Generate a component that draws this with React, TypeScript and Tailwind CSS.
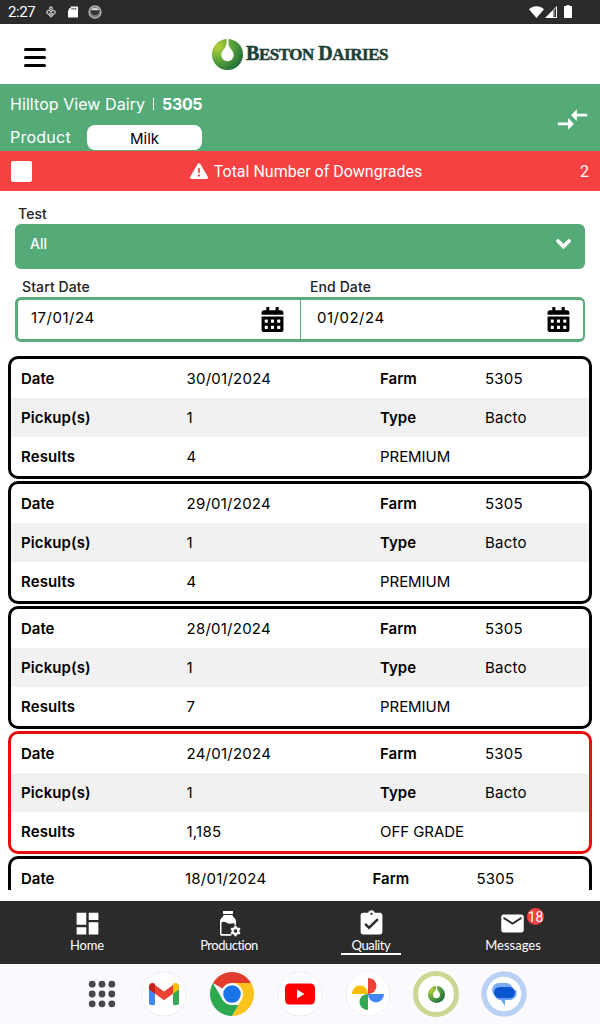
import React from 'react';
import { FaCalendarAlt } from 'react-icons/fa';
import { FaTriangleExclamation } from 'react-icons/fa6';
import {
    MdAssignmentTurnedIn,
    MdCompareArrows,
    MdDashboard,
    MdEmail,
} from 'react-icons/md';

type Result = {
    date: string;
    farm: string;
    pickups: string;
    type: string;
    result: string;
    grade: string;
    failed?: boolean;
};

const results: Result[] = [
    { date: '30/01/2024', farm: '5305', pickups: '1', type: 'Bacto', result: '4', grade: 'PREMIUM' },
    { date: '29/01/2024', farm: '5305', pickups: '1', type: 'Bacto', result: '4', grade: 'PREMIUM' },
    { date: '28/01/2024', farm: '5305', pickups: '1', type: 'Bacto', result: '7', grade: 'PREMIUM' },
    {
        date: '24/01/2024',
        farm: '5305',
        pickups: '1',
        type: 'Bacto',
        result: '1,185',
        grade: 'OFF GRADE',
        failed: true,
    },
];

const BestonMark = ({ size, id }: { size: number; id: string }) => (
    <svg width={size} height={size} viewBox="0 0 30 30" className="shrink-0">
        <defs>
            <radialGradient id={id} cx="0.2" cy="0.25" r="0.9">
                <stop offset="0" stopColor="#b9d03a" />
                <stop offset="0.5" stopColor="#5ba53a" />
                <stop offset="1" stopColor="#1d6a3c" />
            </radialGradient>
        </defs>
        <circle cx="15" cy="15" r="15" fill={`url(#${id})`} />
        <path
            d="M14.300 0h1.600c0 5 .3 7 1.800 9 2.300 2.800 3.300 4 3.300 6.500a6 6 0 0 1-12 0c0-2.500 1.300-4 3.200-6.500C13.800 7 14.200 4 14.300 0z"
            fill="#fff"
        />
    </svg>
);

const StatusBar = () => (
    <div className="flex h-6 items-center bg-[#2b2b2b] pl-2 pr-[27px] text-white">
        <span className="w-[38px] font-['Roboto',sans-serif] text-[15px] leading-6 tracking-[-0.4px]">2:27</span>
        <svg width="10" height="12" viewBox="0 0 10 12" fill="none" stroke="#c4c4c4" strokeWidth="1.300">
            <circle cx="5" cy="2.300" r="1.400" />
            <path d="M5 10.800 1.200 7.200a1.800 1.800 0 0 1 2.500-2.500L5 6l1.300-1.300a1.800 1.800 0 0 1 2.500 2.500z" />
            <path d="M3.300 7 5 8.600 6.700 7" />
        </svg>
        <svg width="10" height="12" viewBox="0 0 11 12" className="ml-3">
            <path d="M3 0h8v12H0V4h1V2h2z" fill="#fff" />
            <path d="M4.500 1.500v2M6.500 1.500v2M8.500 1.500v2" stroke="#2b2b2b" />
        </svg>
        <svg width="14" height="14" viewBox="0 0 14 14" className="ml-[10px]">
            <circle cx="7" cy="7" r="6" fill="#777" stroke="#b5b5b5" strokeWidth="1.300" />
            <path d="M2.800 4.500C5 2.800 9 2.800 11.200 4.500 11.500 8 10 10 7 10S2.500 8 2.800 4.500z" fill="#333" />
            <path d="M2.800 4.300Q7 1.500 11.200 4.300L10 5.300H4z" fill="#ddd" />
        </svg>
        <div className="ml-auto flex items-center">
            <svg width="15" height="12" viewBox="0 0 15 12" fill="#fff">
                <path d="M7.500 12 0 3.200C4-.8 11-.8 15 3.200z" />
            </svg>
            <svg width="12" height="12" viewBox="0 0 12 12" className="ml-px">
                <path d="M0 12 12 0v12z" fill="#fff" />
                <path d="M8.500 4.500 11 2v9H8.500z" fill="#2b2b2b" />
                <path d="M9.500 4v6.500" stroke="#777" />
            </svg>
            <svg width="8" height="13" viewBox="0 0 8 13" fill="#fff" className="-mt-[2px] ml-[7px] mr-px">
                <path d="M2.500 0h3v1H8v12H0V1h2.500z" />
            </svg>
        </div>
    </div>
);

const Header = () => (
    <header className="flex h-[60px] items-center bg-white pl-6">
        <svg width="22" height="20" viewBox="0 0 22 20" className="mt-[6px]" stroke="#000" strokeWidth="3" strokeLinecap="round">
            <path d="M1.500 2.500h19M1.500 10.500h19M1.500 18.500h19" />
        </svg>
        <div className="ml-[166px] flex items-center">
            <BestonMark size={31} id="header-mark" />
            <span className="ml-[3px] whitespace-nowrap font-['Liberation_Serif',serif] text-[20px] font-bold leading-[30px] tracking-[-0.48px] text-[#1f4037] [-webkit-text-stroke:0.5px_#1f4037]">
                B<span className="text-[17px]">ESTON</span> D<span className="text-[17px]">AIRIES</span>
            </span>
        </div>
    </header>
);

const FarmBar = () => (
    <div className="flex h-[67px] items-start justify-between bg-[#54ab78] pl-[10px] pr-[10px] text-white">
        <div>
            <div className="mt-[9px] flex h-[22px] items-center text-base">
                <span className="tracking-[0.06px]">Hilltop View Dairy</span>
                <span className="ml-2 mr-[8px] h-3 w-px bg-white" />
                <span className="font-bold tracking-[-0.35px]">5305</span>
            </div>
            <div className="mt-[10px] flex items-start">
                <span className="w-[77px] text-base leading-6 tracking-[0.25px]">Product</span>
                <span className="h-[25px] w-[115px] rounded-lg bg-white text-center text-[15px] leading-[27px] text-black">
                    Milk
                </span>
            </div>
        </div>
        <MdCompareArrows size={35} className="mt-[18px]" />
    </div>
);

const DowngradeBar = () => (
    <div className="flex h-10 items-center justify-between bg-[#f54141] pl-[11px] pr-[11px] font-['Roboto',sans-serif] text-base text-white">
        <span className="h-[21px] w-[21px] rounded-[2px] bg-white" />
        <span className="flex items-center gap-[6px]">
            <FaTriangleExclamation size={18} />
            <span className="pt-[2px]">Total Number of Downgrades</span>
        </span>
        <span className="pt-[2px]">2</span>
    </div>
);

const DateField = ({ value }: { value: string }) => (
    <div className="flex flex-1 items-center justify-between text-[15px] tracking-[0.5px] text-black">
        <span className="-mt-1">{value}</span>
        <FaCalendarAlt size={25} />
    </div>
);

const Filters = () => (
    <section className="px-[15px] text-sm font-medium tracking-[0.1px] text-[#222]">
        <div className="mt-[13px] pl-[3px] leading-5">Test</div>
        <div className="flex h-[45px] items-start justify-between rounded-md bg-[#54ab78] pl-[15px] pr-[13px] text-white">
            <span className="leading-10 tracking-normal">All</span>
            <svg width="17" height="12" viewBox="0 0 17 12" className="mt-[14px]" fill="none" stroke="#fff" strokeWidth="3.800" strokeLinecap="round">
                <path d="m3 3 5.500 5.500L14 3" />
            </svg>
        </div>
        <div className="mt-2 mb-px flex h-[19px] leading-[19px]">
            <span className="w-[288px] pl-[7px]">Start Date</span>
            <span className="pl-[7px]">End Date</span>
        </div>
        <div className="flex h-[45px] rounded-md border-[3px] border-r-2 border-[#5aaa7b] font-normal">
            <div className="flex w-[283px] border-r border-[#5aaa7b] pl-[13px] pr-[15px]">
                <DateField value="17/01/24" />
            </div>
            <div className="flex flex-1 pl-4 pr-3">
                <DateField value="01/02/24" />
            </div>
        </div>
    </section>
);

const ResultCard = ({ item }: { item: Result }) => (
    <div
        className={`h-[123px] shrink-0 overflow-hidden rounded-[10px] border-[3px] ${
            item.failed ? 'border-[#e80c0c]' : 'border-black'
        }`}
    >
        <div className="grid h-[39px] grid-cols-[165.500px_193.500px_105px_1fr] items-center pl-[10px] pt-[2px]">
            <b className="font-semibold tracking-normal">Date</b>
            <span>{item.date}</span>
            <b className="font-semibold tracking-normal">Farm</b>
            <span>{item.farm}</span>
        </div>
        <div className="grid h-[39px] grid-cols-[165.500px_193.500px_105px_1fr] items-center bg-[#f1f1f1] pl-[10px] pt-[2px]">
            <b className="font-semibold tracking-[0.1px]">Pickup(s)</b>
            <span>{item.pickups}</span>
            <b className="font-semibold tracking-normal">Type</b>
            <span>{item.type}</span>
        </div>
        <div className="grid h-[39px] grid-cols-[165.500px_193.500px_1fr] items-center pl-[10px] pt-[2px]">
            <b className="font-semibold tracking-[0.1px]">Results</b>
            <span>{item.result}</span>
            <span className="tracking-[-0.05px]">{item.grade}</span>
        </div>
    </div>
);

const ResultList = () => (
    <main className="mx-2 mt-[14px] flex h-[534px] flex-col gap-[2px] overflow-hidden text-[15px] tracking-[0.24px] text-black">
        {results.map((item) => (
            <ResultCard key={item.date} item={item} />
        ))}
        <div className="h-[34px] shrink-0 rounded-t-[10px] border-[3px] border-b-0 border-black">
            <div className="grid h-[39px] grid-cols-[164px_187.500px_104px_1fr] items-center pl-[10px] pt-[2px]">
                <b className="font-semibold tracking-normal">Date</b>
                <span>18/01/2024</span>
                <b className="font-semibold tracking-normal">Farm</b>
                <span>5305</span>
            </div>
        </div>
    </main>
);

const ProductionIcon = () => (
    <svg width="22" height="26" viewBox="0 0 22 26" className="ml-[2px]">
        <path d="M4 0h10v3H4z" fill="#fff" />
        <path d="M4.500 4h9c0 2.500 3.500 3 3.500 6V16l-6 8.500H2.500A1.500 1.500 0 0 1 1 23V10c0-3 3.500-3.500 3.500-6z" fill="#fff" />
        <path d="M2.500 11.500c3-2 5 1 8 1.200 2 .1 3.200-.7 5-.2V17L11 23.500H2.500z" fill="#2b2b2b" />
        <path d="M13 23.800H2" stroke="#fff" strokeWidth="1.500" />
        <circle cx="16.500" cy="20" r="5.800" fill="#2b2b2b" />
        <circle cx="16.500" cy="20" r="2.900" fill="none" stroke="#fff" strokeWidth="2.200" />
        <path
            d="M16.500 14.800v2M16.500 23.200v2M12 17.400l1.700 1M19.300 21.600l1.700 1M12 22.600l1.700-1M19.300 18.400l1.700-1"
            stroke="#fff"
            strokeWidth="2.200"
        />
    </svg>
);

const NavItem = ({
    label,
    active,
    labelClass = 'tracking-[-0.2px]',
    children,
}: {
    label: string;
    active?: boolean;
    labelClass?: string;
    children: React.ReactNode;
}) => (
    <div className="flex w-[142px] flex-col items-center">
        <div className="flex h-[35px] items-center justify-center pt-[10px]">{children}</div>
        <span
            className={`flex h-[19px] w-[60px] justify-center whitespace-nowrap leading-[19px] ${
                active ? 'border-b-2 border-white' : ''
            }`}
        >
            <span className={labelClass}>{label}</span>
        </span>
    </div>
);

const BottomNav = () => (
    <nav className="mt-[11px] flex h-[63px] bg-[#2b2b2b] px-4 font-['Lato',sans-serif] text-[13px] text-white">
        <NavItem label="Home">
            <MdDashboard size={29} />
        </NavItem>
        <NavItem label="Production" labelClass="tracking-[-0.5px]">
            <ProductionIcon />
        </NavItem>
        <NavItem label="Quality" labelClass="tracking-[-0.4px]" active>
            <MdAssignmentTurnedIn size={29} />
        </NavItem>
        <NavItem label="Messages" labelClass="tracking-normal">
            <div className="relative mr-px">
                <MdEmail size={27} />
                <span className="absolute -top-[2px] left-[28px] h-[17px] w-[17px] rounded-full bg-[#f54141] text-center font-['Roboto',sans-serif] text-sm leading-[18px]">
                    <span className="-mx-1">18</span>
                </span>
            </div>
        </NavItem>
    </nav>
);

const AppsIcon = () => (
    <svg width="44" height="44" viewBox="0 0 44 44" fill="#46464c">
        {[12.2, 22, 31.8].map((y) => [12.2, 22, 31.8].map((x) => <circle key={`${x}-${y}`} cx={x} cy={y} r="3.400" />))}
    </svg>
);

const GmailIcon = () => (
    <svg width="46" height="46" viewBox="0 0 46 46">
        <circle cx="23" cy="23" r="22" fill="#fff" stroke="#f1eef5" />
        <path d="M8 15v17a2 2 0 0 0 2 2h4V20z" fill="#4285f4" />
        <path d="M32 20v14h4a2 2 0 0 0 2-2V15z" fill="#34a853" />
        <path d="M14 14v8.700l9 6.500 9-6.500V14l-9 6.500z" fill="#ea4335" />
        <path d="M8 18.500v-3c0-3.600 3.800-4.300 6-2.700v9.900z" fill="#c5221f" />
        <path d="M38 18.500v-3c0-3.600-3.800-4.300-6-2.700v9.900z" fill="#fbbc04" />
    </svg>
);

const ChromeIcon = () => (
    <svg width="44" height="44" viewBox="0 0 44 44">
        <path d="M22 22 2.950 11A22 22 0 0 1 41.050 11z" fill="#e33b2e" />
        <path d="M22 11h19.050A22 22 0 0 1 22 44l9.500-16.500z" fill="#fcc31e" />
        <path d="M2.950 11 12.500 27.500 22 33h6.400L22 44A22 22 0 0 1 2.950 11z" fill="#2da94f" />
        <circle cx="22" cy="22" r="11" fill="#fff" />
        <circle cx="22" cy="22" r="8.800" fill="#1a73e8" />
    </svg>
);

const YoutubeIcon = () => (
    <svg width="46" height="46" viewBox="0 0 46 46">
        <circle cx="23" cy="23" r="22" fill="#fff" stroke="#f1eef5" />
        <rect x="8" y="12.500" width="30" height="21" rx="4.500" fill="#f00" />
        <path d="M20 18.500v9l7.500-4.500z" fill="#fff" />
    </svg>
);

const PhotosIcon = () => (
    <svg width="46" height="46" viewBox="0 0 46 46">
        <circle cx="23" cy="23" r="22" fill="#fff" stroke="#f1eef5" />
        <path d="M23 7a8.500 8 0 0 1 0 16z" fill="#ea4335" />
        <path d="M39 23a8 8.500 0 0 1-16 0z" fill="#4285f4" />
        <path d="M23 39a8.500 8 0 0 1 0-16z" fill="#34a853" />
        <path d="M7 23a8 8.500 0 0 1 16 0z" fill="#fbbc04" />
    </svg>
);

const MessagesIcon = () => (
    <svg width="46" height="46" viewBox="0 0 46 46">
        <circle cx="23" cy="23" r="20" fill="#fff" stroke="#b9d1f4" strokeWidth="5.500" />
        <rect x="11" y="12" width="21" height="14" rx="7" fill="#7cacf8" />
        <path d="M14 25c1 2.500 3 4 6 4l4 6v-6h4.500a7 7 0 0 0 7-7v-3z" fill="#669df6" />
        <rect x="13" y="16" width="21" height="11" rx="5.500" fill="#0b57d0" />
    </svg>
);

const Dock = () => (
    <footer className="flex h-[60px] items-center bg-[#fbf8fe] pl-[68px]">
        <div className="flex w-[68px] justify-center"><AppsIcon /></div>
        <div className="flex w-[56px] justify-center"><GmailIcon /></div>
        <div className="flex w-[80px] justify-center"><ChromeIcon /></div>
        <div className="flex w-[56px] justify-center"><YoutubeIcon /></div>
        <div className="flex w-[80px] justify-center"><PhotosIcon /></div>
        <div className="flex w-[56px] justify-center">
            <div className="flex h-[46px] w-[46px] items-center justify-center rounded-full border-[5.500px] border-[#c9d792] bg-white">
                <BestonMark size={17} id="dock-mark" />
            </div>
        </div>
        <div className="flex w-[80px] justify-center"><MessagesIcon /></div>
    </footer>
);

const App = () => {
    return (
        <div className="flex h-[1024px] w-[600px] flex-col overflow-hidden bg-white font-['Inter',sans-serif]">
            <StatusBar />
            <Header />
            <FarmBar />
            <DowngradeBar />
            <Filters />
            <ResultList />
            <BottomNav />
            <Dock />
        </div>
    );
};

export default App;
